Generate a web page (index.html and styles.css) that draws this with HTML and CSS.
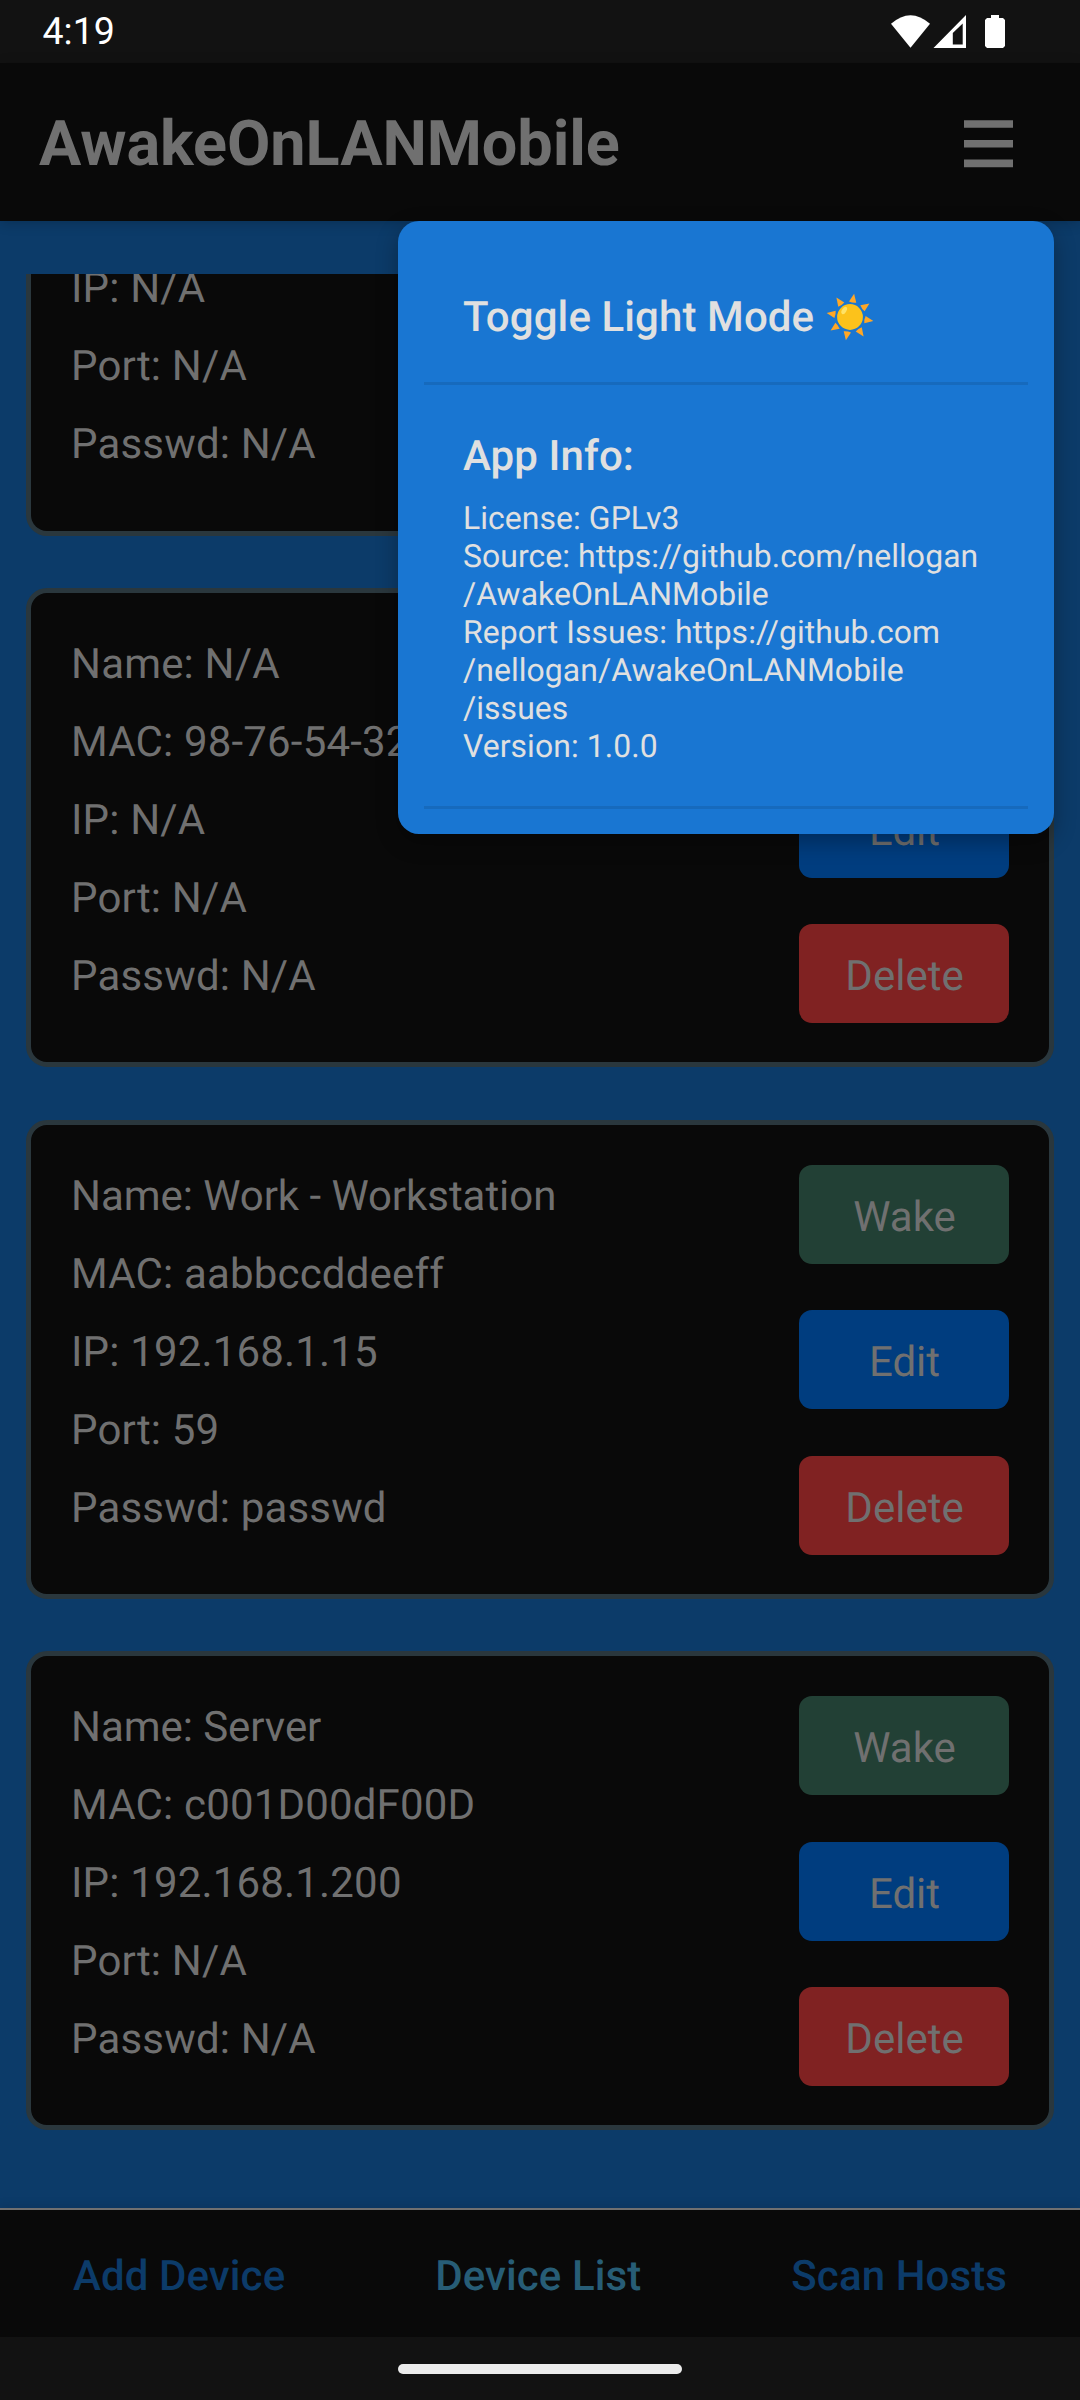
FILE: index.html
```html
<!DOCTYPE html>
<html lang="en">
<head>
<meta charset="utf-8">
<title>AwakeOnLANMobile</title>
<link rel="stylesheet" href="styles.css">
</head>
<body>
<div class="screen">
  <div class="status">
    <span class="clock">4:19</span>
    <svg class="status-icons" width="116" height="36" viewBox="890 13 116 36" fill="#fff">
      <path d="M891 22.800Q910.500 5.600 930 22.800L910.500 46.700Z"/>
      <path fill-rule="evenodd" d="M933.500 47L966 14V47ZM952.800 43.500H962.700V22.500L952.800 32Z"/>
      <path d="M991 14h8v3h4l2 2v26l-2 2h-16l-2-2V19l2-2h4z"/>
    </svg>
  </div>
  <header class="header">
    <h1 class="title">AwakeOnLANMobile</h1>
    <svg class="burger" width="49" height="48" viewBox="0 0 49 48" fill="#707070">
      <path d="M0 .2h49v7.600H0zM0 20h49v7.600H0zM0 39.600h49v7.600H0z"/>
    </svg>
  </header>
  <main class="content">
    <div class="list">
      <section class="card scrolled">
        <div class="info"><p>IP: N/A</p><p>Port: N/A</p><p>Passwd: N/A</p></div>
      </section>
      <section class="card">
        <div class="info"><p>Name: N/A</p><p>MAC: 98-76-54-32</p><p>IP: N/A</p><p>Port: N/A</p><p>Passwd: N/A</p></div>
        <div class="actions"><div class="btn edit">Edit</div><div class="btn delete">Delete</div></div>
      </section>
      <section class="card">
        <div class="info"><p class="tight">Name: Work - Workstation</p><p>MAC: aabbccddeeff</p><p>IP: 192.168.1.15</p><p>Port: 59</p><p>Passwd: passwd</p></div>
        <div class="actions"><div class="btn wake">Wake</div><div class="btn edit">Edit</div><div class="btn delete">Delete</div></div>
      </section>
      <section class="card">
        <div class="info"><p class="tight">Name: Server</p><p>MAC: c001D00dF00D</p><p>IP: 192.168.1.200</p><p>Port: N/A</p><p>Passwd: N/A</p></div>
        <div class="actions"><div class="btn wake">Wake</div><div class="btn edit">Edit</div><div class="btn delete">Delete</div></div>
      </section>
    </div>
  </main>
  <nav class="tabs">
    <span class="tab">Add Device</span>
    <span class="tab active">Device List</span>
    <span class="tab">Scan Hosts</span>
  </nav>
  <div class="gesture"><div class="pill"></div></div>

  <div class="menu">
    <div class="menu-item toggle">
      <span>Toggle Light Mode</span>
      <svg class="sun" width="50" height="50" viewBox="-25 -25 50 50">
        <defs><path id="ray" d="M23.700 0L15.200 3.700Q14.200 0 15.200-3.700Z"/></defs>
        <g fill="#ffa726">
          <use href="#ray" transform="rotate(10)"/><use href="#ray" transform="rotate(55)"/>
          <use href="#ray" transform="rotate(100)"/><use href="#ray" transform="rotate(145)"/>
          <use href="#ray" transform="rotate(190)"/><use href="#ray" transform="rotate(235)"/>
          <use href="#ray" transform="rotate(280)"/><use href="#ray" transform="rotate(325)"/>
        </g>
        <circle r="12.900" fill="#fcc21b"/>
        <ellipse cx="-5.800" cy="-6.500" rx="2.200" ry="4" transform="rotate(32 -5.800 -6.500)" fill="#fee266"/>
      </svg>
    </div>
    <div class="menu-item about">
      <h2>App Info:</h2>
      <p>License: GPLv3<br>Source: https://github.com/nellogan<br>/AwakeOnLANMobile<br>Report Issues: https://github.com<br>/nellogan/AwakeOnLANMobile<br>/issues<br>Version: 1.0.0</p>
    </div>
  </div>
</div>
</body>
</html>
```
FILE: styles.css
```css
* { box-sizing: border-box; }

body {
  margin: 0;
  font-family: Roboto, "Liberation Sans", sans-serif;
  font-size: 42px;
  color: #707070;
  text-rendering: geometricPrecision;
}

h1, h2, p { margin: 0; }

.screen {
  position: relative;
  display: flex;
  flex-direction: column;
  width: 1080px;
  height: 2400px;
  overflow: hidden;
  background: #0c3b69;
}

.status {
  display: flex;
  align-items: center;
  justify-content: space-between;
  height: 63px;
  padding: 0 74px 0 42.500px;
  background: #121212;
}

.clock {
  font-size: 37.500px;
  line-height: 62px;
  color: #fff;
}

.header {
  display: flex;
  align-items: center;
  justify-content: space-between;
  height: 158px;
  padding: 3px 67px 0 39px;
  background: #090909;
  box-shadow: 0 2px 12px rgba(0, 0, 0, .2);
}

.title {
  padding-top: 3px;
  font-size: 63px;
  font-weight: 700;
  line-height: 74px;
  letter-spacing: -.08px;
}

.content {
  flex: 1;
  min-height: 0;
  margin-top: 53px;
  padding: 0 26px;
  overflow: hidden;
}

.list {
  display: flex;
  flex-direction: column;
  gap: 52.3px;
}

.card {
  display: flex;
  flex: none;
  justify-content: space-between;
  height: 479px;
  padding: 33px 40px 0 40px;
  border: 5px solid #2a373d;
  border-radius: 21px;
  background: #090909;
}

/* Card whose upper part has scrolled out of the list. */
.scrolled {
  align-items: flex-end;
  height: 262px;
  padding: 0 40px 47px;
  border-top: 0;
  border-top-left-radius: 0;
  border-top-right-radius: 0;
}

.info p {
  line-height: 78px;
  letter-spacing: .17px;
  white-space: nowrap;
}

.info .tight { letter-spacing: -.05px; }

.actions {
  display: flex;
  flex-direction: column;
  justify-content: flex-end;
  gap: 46.400px;
  padding: 0 0 38.900px;
}

.btn {
  width: 210px;
  height: 99px;
  border-radius: 13px;
  line-height: 105px;
  text-align: center;
  text-indent: 1px;
}

.wake { background: #224035; }
.edit { background: #003d7f; }
.delete { background: #802222; }

.tabs {
  display: flex;
  align-items: center;
  justify-content: space-between;
  height: 129px;
  padding: 5px 73px 0;
  border-top: 2px solid #707070;
  background: #090909;
  box-shadow: 0 -2px 10px rgba(0, 0, 0, .1);
}

.tab {
  font-weight: 500;
  letter-spacing: .1px;
  color: #0c3b69;
}

.tab.active { color: #275d76; }

.gesture {
  display: flex;
  justify-content: center;
  height: 63px;
  padding-top: 27px;
  background: #121212;
}

.pill {
  width: 284px;
  height: 10px;
  border-radius: 5px;
  background: #ececec;
}

.menu {
  position: absolute;
  top: 221px;
  left: 398px;
  width: 656px;
  height: 613px;
  padding: 0 26px;
  border-radius: 21px;
  background: #1976d2;
  color: #e0e0e0;
  box-shadow: 0 8px 22px rgba(0, 0, 0, .3);
}

.menu-item {
  padding: 0 39px;
  border-bottom: 3px solid #166abd;
}

.toggle {
  display: flex;
  align-items: center;
  gap: 11px;
  height: 164px;
  padding-top: 31px;
  font-weight: 500;
  letter-spacing: .1px;
}

.about {
  height: 424px;
  padding-top: 47px;
}

.about h2 {
  font-size: 42px;
  font-weight: 500;
  line-height: 50px;
  letter-spacing: .1px;
}

.about p {
  padding-top: 17px;
  font-size: 31.900px;
  line-height: 38px;
  letter-spacing: .08px;
  white-space: nowrap;
}
```
